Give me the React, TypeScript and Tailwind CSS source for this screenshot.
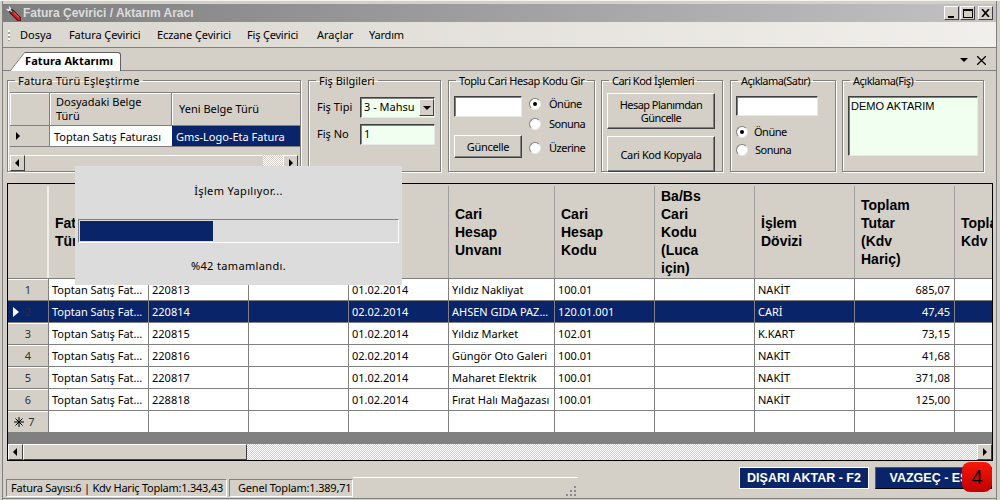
const font = "font-['Noto_Sans',sans-serif]";

const cols = [100, 100, 100, 100, 106, 100, 100, 100, 100, 38];
const rows = [
  ["1", "Toptan Satış Fat…", "220813", "", "01.02.2014", "Yıldız Nakliyat", "100.01", "", "NAKİT", "685,07"],
  ["2", "Toptan Satış Fat…", "220814", "", "02.02.2014", "AHSEN GIDA PAZ…", "120.01.001", "", "CARİ", "47,45"],
  ["3", "Toptan Satış Fat…", "220815", "", "01.02.2014", "Yıldız Market", "102.01", "", "K.KART", "73,15"],
  ["4", "Toptan Satış Fat…", "220816", "", "02.02.2014", "Güngör Oto Galeri", "100.01", "", "NAKİT", "41,68"],
  ["5", "Toptan Satış Fat…", "220817", "", "01.02.2014", "Maharet Elektrik", "100.01", "", "NAKİT", "371,08"],
  ["6", "Toptan Satış Fat…", "228818", "", "01.02.2014", "Fırat Halı Mağazası", "100.01", "", "NAKİT", "125,00"],
  ["7", "", "", "", "", "", "", "", "", ""],
];
const heads: string[][] = [
  ["Fatura", "Türü"],
  [],
  [],
  [],
  ["Cari", "Hesap", "Unvanı"],
  ["Cari", "Hesap", "Kodu"],
  ["Ba/Bs", "Cari", "Kodu", "(Luca", "için)"],
  ["İşlem", "Dövizi"],
  ["Toplam", "Tutar", "(Kdv", "Hariç)"],
  ["Toplam", "Kdv"],
];

function Group({ title, width, children, cls = "", lcls = "" }: { title: string; width: number; children: React.ReactNode; cls?: string; lcls?: string }) {
  return (
    <fieldset className={`h-[98px] shrink-0 border border-[#808080] shadow-[inset_1px_1px_0_#fff,1px_1px_0_#fff] ${cls}`} style={{ width }}>
      <legend className={`ml-[7px] px-[3px] text-[11px] leading-[13px] text-black whitespace-nowrap ${lcls}`}>{title}</legend>
      {children}
    </fieldset>
  );
}

function Radio({ on, label, gap = 8 }: { on?: boolean; label: string; gap?: number }) {
  return (
    <div className="flex items-center text-[11px] leading-[13px] tracking-[-0.5px]">
      <span className="w-[12px] h-[12px] rounded-full bg-white border border-t-[#808080] border-l-[#808080] border-r-[#e8e8e8] border-b-[#e8e8e8] flex items-center justify-center shrink-0">
        {on && <span className="w-[4px] h-[4px] rounded-full bg-black" />}
      </span>
      <span style={{ marginLeft: gap }}>{label}</span>
    </div>
  );
}

function Btn({ w, h, children, cls = "" }: { w: number; h: number; children: React.ReactNode; cls?: string }) {
  return (
    <div
      className={`flex items-center justify-center text-center text-[11px] leading-[13px] bg-[#d4d0c8] border border-t-white border-l-white border-r-[#404040] border-b-[#404040] shadow-[inset_-1px_-1px_0_#808080] ${cls}`}
      style={{ width: w, height: h }}
    >
      {children}
    </div>
  );
}

const sunken = "border border-t-[#404040] border-l-[#404040] border-r-[#e8e8e8] border-b-[#e8e8e8] shadow-[inset_1px_1px_0_#808080]";

function Arrow({ dir }: { dir: "l" | "r" | "d" }) {
  const pts = dir === "l" ? "6,1 2,5 6,9" : dir === "r" ? "3,1 7,5 3,9" : "1,3 9,3 5,7";
  return (
    <svg width="9" height="10" viewBox="0 0 9 10"><polygon points={pts} fill="#000" /></svg>
  );
}

const sbBtn = "w-[15px] h-full flex items-center justify-center bg-[#d4d0c8] border border-t-white border-l-white border-r-[#404040] border-b-[#404040] shrink-0";
const dither = "bg-[length:2px_2px] bg-[conic-gradient(#fff_25%,#d4d0c8_0_50%,#fff_0_75%,#d4d0c8_0)]";

export default function App() {
  return (
    <div className={`w-[1000px] h-[500px] overflow-hidden relative bg-[#d4d0c8] text-black ${font} flex pl-[2px] pr-[3px] border-t border-[#f4f2ec]`}>
      <div className="flex-1 min-w-0 flex flex-col pt-[3px] border-x border-[#808080]">
        {/* Title bar */}
        <div className="h-[18px] shrink-0 flex items-center bg-gradient-to-r from-[#7f7f7f] to-[#c2c2c2] pl-[2px] pr-[3px]">
          <svg width="16" height="16" viewBox="0 0 16 16" className="shrink-0">
            <path d="M7 7 L14 14" stroke="#3a1010" strokeWidth="5" strokeLinecap="round" />
            <path d="M7 7 L14 14" stroke="#e01818" strokeWidth="3" strokeLinecap="round" />
            <path d="M8 6.5 L14 12.5" stroke="#ff8a80" strokeWidth="0.8" />
            <path d="M2.5 5 L7 8 L8 7 L5 2.5" fill="#c8c8c8" stroke="#303030" strokeWidth="1" />
            <path d="M1.5 4 L3.5 5.5 L5.5 3.5 L4 1.5" fill="none" stroke="#f0f0f0" strokeWidth="1.2" />
          </svg>
          <span className="ml-[2px] text-[12px] font-bold text-[#dcdcdc] font-['Liberation_Sans',sans-serif]">Fatura Çevirici / Aktarım Aracı</span>
          <div className="ml-auto flex items-center">
            {["min", "max", "close"].map((k) => (
              <div key={k} className={`w-[15px] h-[14px] bg-[#d4d0c8] border border-t-white border-l-white border-r-[#404040] border-b-[#404040] flex items-center justify-center ${k === "close" ? "ml-[3px]" : "ml-[1px]"}`}>
                {k === "min" && <span className="w-[6px] h-[2px] bg-black mt-[7px] -ml-[1px]" />}
                {k === "max" && <span className="w-[10px] h-[9px] border border-black border-t-2" />}
                {k === "close" && (
                  <svg width="9" height="8" viewBox="0 0 9 8"><path d="M1 0 L8 8 M8 0 L1 8" stroke="#000" strokeWidth="1.6" /></svg>
                )}
              </div>
            ))}
          </div>
        </div>

        {/* Menu */}
        <div className="h-[25px] shrink-0 flex items-center pt-[2px] bg-gradient-to-r from-[#d9d6cf] to-[#f1efeb] text-[11px]">
          <div className="ml-[5px] mr-[10px] w-[2px] h-[11px] bg-[repeating-linear-gradient(#fff_0_2px,#a8a59d_2px_4px)]" />
          <span className="w-[49px]">Dosya</span>
          <span className="w-[88px] tracking-[-0.1px]">Fatura Çevirici</span>
          <span className="w-[90px] tracking-[-0.1px]">Eczane Çevirici</span>
          <span className="w-[70px] tracking-[-0.2px]">Fiş Çevirici</span>
          <span className="w-[52px]">Araçlar</span>
          <span className="tracking-[-0.2px]">Yardım</span>
        </div>

        {/* Tab strip */}
        <div className="h-[24px] shrink-0 flex items-end border-t border-b border-[#808080]">
          <svg width="15" height="19" viewBox="0 0 15 19" className="-mb-[1px] shrink-0 ml-[7px]"><path d="M0 19 L15 0 V19 Z" fill="#fff" /><path d="M0 19 L15 0" stroke="#808080" /></svg>
          <div className="h-[19px] w-[96px] -mb-[1px] pb-[1px] bg-white border-t border-r border-[#606060] rounded-tr-[3px] text-[11px] font-bold flex items-center tracking-[0.1px] whitespace-nowrap">Fatura Aktarımı</div>
          <div className="ml-auto mr-[10px] mb-[5px] flex items-center gap-[9px]">
            <Arrow dir="d" />
            <svg width="9" height="9" viewBox="0 0 9 9"><path d="M0 0 L9 9 M9 0 L0 9" stroke="#000" strokeWidth="1.3" /></svg>
          </div>
        </div>

        {/* Group boxes */}
        <div className="flex mt-[3px] ml-[4px] shrink-0 h-[102px]">
          <Group title="Fatura Türü Eşleştirme" width={294} lcls="tracking-[0.25px]">
            <div className="ml-[2px] mt-[5px] border-t border-[#808080]">
              <div className="flex h-[33px] items-stretch text-[11px] leading-[14px] border-b border-[#808080]">
                <div className="w-[40px] border-r border-[#808080] shadow-[inset_1px_1px_0_#fff]" />
                <div className="w-[122px] border-r border-[#808080] pl-[6px] flex items-center shadow-[inset_1px_1px_0_#fff]">Dosyadaki Belge<br />Türü</div>
                <div className="flex-1 pl-[7px] flex items-center shadow-[inset_1px_1px_0_#fff]">Yeni Belge Türü</div>
              </div>
              <div className="flex h-[21px] text-[11px] leading-[21px] border-b border-[#808080]">
                <div className="w-[40px] border-r border-[#808080] flex items-center pl-[3px]"><Arrow dir="r" /></div>
                <div className="w-[122px] bg-white pl-[4px] whitespace-nowrap overflow-hidden">Toptan Satış Faturası</div>
                <div className="flex-1 bg-[#0a246a] text-white pl-[4px] whitespace-nowrap">Gms-Logo-Eta Fatura</div>
              </div>
              <div className="flex h-[16px] mt-[8px] items-stretch">
                <div className={sbBtn}><Arrow dir="l" /></div>
                <div className="w-[238px] border-t border-white" />
                <div className={`w-[20px] ${dither}`} />
                <div className={sbBtn}><Arrow dir="r" /></div>
              </div>
            </div>
          </Group>

          <Group title="Fiş Bilgileri" width={133} cls="ml-[7px]">
            <div className="mt-[10px] ml-[8px] text-[11px] flex flex-col gap-[6px]">
              <div className="flex items-center">
                <span className="w-[43px]">Fiş Tipi</span>
                <div className={`w-[75px] h-[21px] bg-[#f0fff0] flex items-center pl-[3px] ${sunken}`}>
                  <span className="flex-1 whitespace-nowrap overflow-hidden">3 - Mahsu</span>
                  <div className="w-[15px] h-[17px] flex items-center justify-center bg-[#d4d0c8] border border-t-white border-l-white border-r-[#404040] border-b-[#404040]"><Arrow dir="d" /></div>
                </div>
              </div>
              <div className="flex items-center">
                <span className="w-[43px]">Fiş No</span>
                <div className={`w-[75px] h-[21px] bg-[#f0fff0] flex items-center pl-[3px] ${sunken}`}>1</div>
              </div>
            </div>
          </Group>

          <Group title="Toplu Cari Hesap Kodu Gir" width={147} cls="ml-[7px]" lcls="tracking-[-0.4px]">
            <div className="mt-[9px] ml-[5px] flex text-[11px]">
              <div className="flex flex-col gap-[18px] w-[75px]">
                <div className={`w-[68px] h-[21px] bg-white ${sunken}`} />
                <Btn w={68} h={23} cls="tracking-[-0.3px]">Güncelle</Btn>
              </div>
              <div className="flex flex-col pt-[1px]">
                <Radio on label="Önüne" />
                <div className="mt-[7px]"><Radio label="Sonuna" /></div>
                <div className="mt-[11px]"><Radio label="Üzerine" /></div>
              </div>
            </div>
          </Group>

          <Group title="Cari Kod İşlemleri" width={122} cls="ml-[6px]" lcls="tracking-[-0.5px]">
            <div className="mt-[6px] ml-[5px] flex flex-col gap-[7px]">
              <Btn w={108} h={36} cls="tracking-[-0.55px]">Hesap Planımdan<br />Güncelle</Btn>
              <Btn w={108} h={36} cls="tracking-[-0.4px]">Cari Kod Kopyala</Btn>
            </div>
          </Group>

          <Group title="Açıklama(Satır)" width={106} cls="ml-[7px]" lcls="tracking-[-0.5px]">
            <div className="mt-[9px] ml-[5px]">
              <div className={`w-[82px] h-[20px] bg-white ${sunken}`} />
              <div className="mt-[9px]"><Radio on label="Önüne" gap={6} /></div>
              <div className="mt-[5px]"><Radio label="Sonuna" gap={7} /></div>
            </div>
          </Group>

          <Group title="Açıklama(Fiş)" width={142} cls="ml-[6px]" lcls="tracking-[-0.5px]">
            <div className={`mt-[9px] ml-[5px] w-[130px] h-[60px] bg-[#f0fff0] pl-[2px] pt-[2px] text-[11px] leading-[14px] font-['Liberation_Sans',sans-serif] ${sunken}`}>DEMO AKTARIM</div>
          </Group>
        </div>

        {/* Data grid */}
        <div className="ml-[4px] mt-[7px] w-[986px] h-[278px] shrink-0 border border-black bg-[#808080] flex flex-col overflow-hidden">
          <div className="h-[95px] shrink-0 flex bg-[#d4d0c8] border-b border-[#808080] pt-[2px]">
            <div className="w-[41px] shrink-0 border-r-2 border-[#f0eee8]" />
            {heads.map((h, i) => (
              <div key={i} className="shrink-0 border-r border-[#a0a0a0] flex items-center pl-[6px] text-[14px] leading-[18px] font-bold font-['Liberation_Sans',sans-serif] overflow-hidden" style={{ width: cols[i] }}>
                <div>
                  {h.map((line) => (
                    <div key={line} className="whitespace-nowrap">{line}</div>
                  ))}
                </div>
              </div>
            ))}
          </div>
          {rows.map((r, ri) => {
            const sel = ri === 1;
            return (
              <div key={ri} className={`h-[22px] shrink-0 flex text-[11px] leading-[21px] border-b border-[#808080] ${sel ? "bg-[#0a246a] text-white" : "bg-white"}`}>
                <div className={`w-[41px] shrink-0 flex items-center relative border-r border-[#808080] text-[#303030] ${sel ? "bg-[#0a246a]" : "bg-[#d4d0c8] shadow-[inset_0_1px_0_#fff]"}`}>
                  {sel && <span className="absolute left-[5px] top-[6px]"><svg width="6" height="10" viewBox="0 0 6 10"><polygon points="0,0 6,5 0,10" fill="#fff" /></svg></span>}
                  {ri === 6 && (
                    <span className="absolute left-[6px] top-[6px]">
                      <svg width="10" height="10" viewBox="0 0 10 10"><path d="M5 0 V10 M0 5 H10 M1.5 1.5 L8.5 8.5 M8.5 1.5 L1.5 8.5" stroke="#000" strokeWidth="1" /></svg>
                    </span>
                  )}
                  <span className={`w-full text-center ${ri === 6 ? "pl-[7px]" : ""}`}>{r[0]}</span>
                </div>
                {cols.map((w, i) => (
                  <div key={i} className={`shrink-0 border-r border-[#808080] px-[3px] whitespace-nowrap overflow-hidden ${i === 8 ? "text-right pr-[4px]" : ""}`} style={{ width: w }}>
                    {r[i + 1] ?? ""}
                  </div>
                ))}
              </div>
            );
          })}
          <div className="flex-1" />
          <div className="h-[16px] shrink-0 flex items-stretch bg-[#d4d0c8]">
            <div className={sbBtn}><Arrow dir="l" /></div>
            <div className="w-[224px] bg-[#d4d0c8] border border-t-white border-l-white border-r-[#404040] border-b-[#404040]" />
            <div className={`flex-1 ${dither}`} />
            <div className={sbBtn}><Arrow dir="r" /></div>
          </div>
        </div>

        {/* Footer */}
        <div className="flex-1 flex items-start justify-between pt-[6px]">
          <div className="ml-[3px] mt-[12px] flex items-stretch text-[11px] h-[18px]">
            <div className="w-[221px] border border-t-[#808080] border-l-[#808080] border-r-white border-b-white flex items-center pl-[4px] whitespace-nowrap tracking-[-0.24px]">Fatura Sayısı:6 | Kdv Hariç Toplam:1.343,43</div>
            <div className="ml-[2px] w-[124px] border border-t-[#808080] border-l-[#808080] border-r-white border-b-white flex items-center pl-[8px] whitespace-nowrap tracking-[-0.2px]">Genel Toplam:1.389,71</div>
            <div className="w-[225px] border-t border-white flex items-end justify-end pr-[2px] pb-[1px] -mt-[2px]">
              <svg width="10" height="10" viewBox="0 0 10 10">
                <g fill="#8a8a8a">
                  <rect x="8" y="0" width="2" height="2" />
                  <rect x="4" y="4" width="2" height="2" />
                  <rect x="8" y="4" width="2" height="2" />
                  <rect x="0" y="8" width="2" height="2" />
                  <rect x="4" y="8" width="2" height="2" />
                  <rect x="8" y="8" width="2" height="2" />
                </g>
              </svg>
            </div>
          </div>
          <div className="mr-[4px] flex gap-[6px] font-['Liberation_Sans',sans-serif] font-bold text-[12.5px] text-white">
            <div className="w-[130px] h-[22px] bg-[#0a246a] border border-white flex items-center justify-center whitespace-nowrap">DIŞARI AKTAR - F2</div>
            <div className="w-[117px] h-[22px] bg-[#0a246a] border border-t-[#3a5ab0] border-l-[#3a5ab0] border-r-black border-b-black flex items-center justify-center whitespace-nowrap">VAZGEÇ - ESC</div>
          </div>
        </div>
        <div className="h-[2px] shrink-0 border-t border-[#808080]" />
      </div>

      {/* Progress popup */}
      <div className="absolute left-[75px] top-[165px] w-[327px] h-[119px] bg-[#dcdcdc] flex flex-col items-center text-[11px] px-[3px]">
        <div className="mt-[17px] h-[15px] leading-[15px] tracking-[0.35px]">İşlem Yapılıyor...</div>
        <div className="mt-[21px] w-[321px] h-[24px] border border-t-[#808080] border-l-[#808080] border-r-white border-b-white p-[1px]">
          <div className="h-full w-[133px] bg-[#0a246a]" />
        </div>
        <div className="mt-[15px] h-[15px] leading-[15px] tracking-[0.35px]">%42 tamamlandı.</div>
      </div>

      {/* Annotation badge */}
      <div className="absolute left-[962px] top-[461px] w-[30px] h-[30px] rounded-[8px] bg-gradient-to-b from-[#f81808] to-[#c00000] flex items-center justify-center text-[20px] text-black font-['Liberation_Sans',sans-serif]">4</div>
    </div>
  );
}
